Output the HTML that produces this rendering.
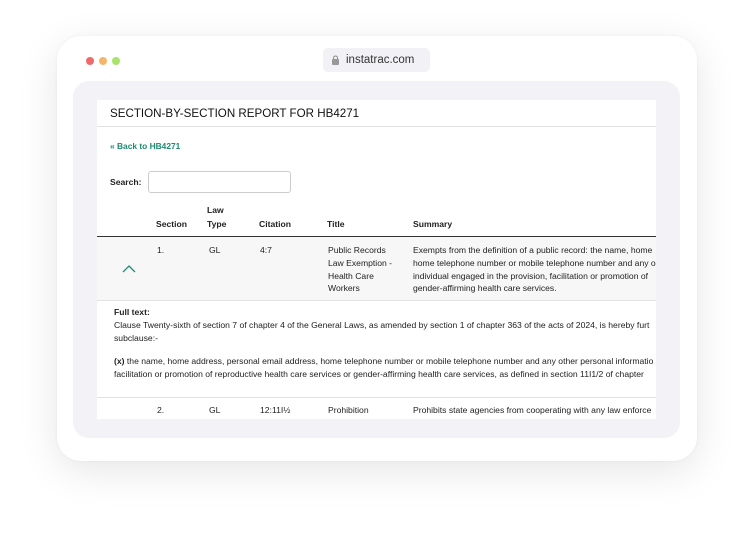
<!DOCTYPE html>
<html><head><style>
body{margin:0;width:754px;height:538px;background:#fff;font-family:"Liberation Sans",Arial,sans-serif;position:relative;overflow:hidden}
.card{position:absolute;left:57px;top:36px;width:640px;height:425px;background:#fff;border-radius:24px;box-shadow:0 10px 40px rgba(0,0,0,0.10),0 0 3px rgba(0,0,0,0.05)}
.dot{position:absolute;top:57px;width:8px;height:8px;border-radius:50%}
.url{position:absolute;left:323px;top:48px;width:107px;height:24px;background:#f2f2f6;border-radius:5px;font-size:11.5px;color:#333;line-height:24px}
.panel{position:absolute;left:73px;top:81px;width:607px;height:357px;background:#f2f2f7;border-radius:16px}
.content{position:absolute;left:97px;top:100px;width:559px;height:319px;background:#fff;overflow:hidden;font-size:8.6px;color:#222}
.t{position:absolute;white-space:nowrap}
b{font-weight:bold}
</style></head><body>
<div class="card"></div>
<div class="dot" style="left:86px;background:#f06a6a"></div>
<div class="dot" style="left:99px;background:#f5b56a"></div>
<div class="dot" style="left:112px;background:#a8e46a"></div>
<div class="url"><svg style="position:absolute;left:9px;top:7px" width="7" height="10" viewBox="0 0 7 10"><rect x="0" y="4" width="7" height="6" rx="1" fill="#999"/><path d="M1.5 4.5V3a2 2 0 0 1 4 0v1.5" stroke="#999" stroke-width="1.2" fill="none"/></svg><span style="position:absolute;left:23px">instatrac.com</span></div>
<div class="panel"></div>
<div class="content">
<div class="t" style="left:13px;top:7px;font-size:11.6px;color:#111">SECTION-BY-SECTION REPORT FOR HB4271</div>
<div style="position:absolute;left:0;top:26px;width:559px;height:1px;background:#e2e2e2"></div>
<div class="t" style="left:13px;top:41px;color:#1e8a70;font-weight:bold;font-size:8.4px">« Back to HB4271</div>
<div class="t" style="left:13px;top:77px;font-weight:bold">Search:</div>
<div style="position:absolute;left:51px;top:71px;width:141px;height:20px;border:1px solid #ccc;border-radius:3px"></div>
<div class="t" style="left:110px;top:105px;font-weight:bold">Law</div>
<div class="t" style="left:59px;top:119px;font-weight:bold">Section</div>
<div class="t" style="left:110px;top:119px;font-weight:bold">Type</div>
<div class="t" style="left:162px;top:119px;font-weight:bold">Citation</div>
<div class="t" style="left:230px;top:119px;font-weight:bold">Title</div>
<div class="t" style="left:316px;top:119px;font-weight:bold">Summary</div>
<div style="position:absolute;left:0;top:136px;width:559px;height:63px;background:#f7f7f7;border-top:1px solid #333;border-bottom:1px solid #e2e2e2"></div>
<svg style="position:absolute;left:25px;top:165px" width="14" height="8" viewBox="0 0 14 8"><path d="M1 7L7 1L13 7" stroke="#1e8a70" stroke-width="1.3" fill="none"/></svg>
<div class="t" style="left:60px;top:144px;line-height:12.8px">1.</div>
<div class="t" style="left:112px;top:144px;line-height:12.8px">GL</div>
<div class="t" style="left:163px;top:144px;line-height:12.8px">4:7</div>
<div class="t" style="left:231px;top:144px;line-height:12.8px">Public Records<br>Law Exemption -<br>Health Care<br>Workers</div>
<div class="t" style="left:316px;top:144px;line-height:12.8px">Exempts from the definition of a public record: the name, home<br>home telephone number or mobile telephone number and any o<br>individual engaged in the provision, facilitation or promotion of<br>gender-affirming health care services.</div>
<div class="t" style="left:17px;top:206px;line-height:12.8px"><b>Full text:</b><br>Clause Twenty-sixth of section 7 of chapter 4 of the General Laws, as amended by section 1 of chapter 363 of the acts of 2024, is hereby furt<br>subclause:-</div>
<div class="t" style="left:17px;top:255px;line-height:12.8px"><b>(x)</b> the name, home address, personal email address, home telephone number or mobile telephone number and any other personal informatio<br>facilitation or promotion of reproductive health care services or gender-affirming health care services, as defined in section 11I1/2 of chapter</div>
<div style="position:absolute;left:0;top:297px;width:559px;height:1px;background:#e2e2e2"></div>
<div class="t" style="left:60px;top:305px">2.</div>
<div class="t" style="left:112px;top:305px">GL</div>
<div class="t" style="left:163px;top:305px">12:11I½</div>
<div class="t" style="left:231px;top:305px">Prohibition</div>
<div class="t" style="left:316px;top:305px">Prohibits state agencies from cooperating with any law enforce</div>
</div>
</body></html>
